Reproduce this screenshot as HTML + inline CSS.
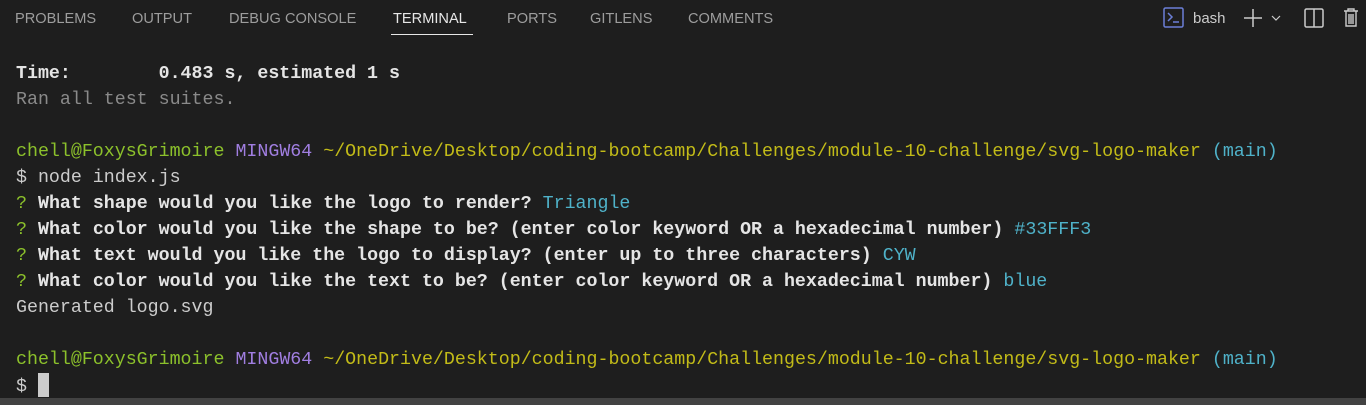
<!DOCTYPE html>
<html><head><meta charset="utf-8"><style>
html,body{margin:0;padding:0;background:#1e1e1e;width:1366px;height:405px;overflow:hidden;position:relative}
.tab{position:absolute;top:10px;font:14.6px "Liberation Sans",sans-serif;color:#9d9d9d;line-height:18px;white-space:nowrap}
.act{color:#e7e7e7}
.ul{position:absolute;left:391px;top:34px;width:82px;height:1px;background:#e7e7e7}
.term{position:absolute;left:16px;top:61px;font:18.3px "Liberation Mono",monospace;line-height:26px;color:#cccccc;white-space:pre}
.b{font-weight:bold;color:#e5e5e5}
.g{color:#8cc12b}.p{color:#a07ee0}.y{color:#c2bb18}.c{color:#4fb2c9}.gr{color:#8a8a8a}
.cur{display:inline-block;width:11px;height:24px;background:#cccccc;vertical-align:-6px}
.bar{position:absolute;left:0;top:398px;width:1366px;height:7px;background:#424242}
</style></head><body>
<div class="tab" style="left:15px">PROBLEMS</div>
<div class="tab" style="left:132px">OUTPUT</div>
<div class="tab" style="left:229px">DEBUG CONSOLE</div>
<div class="tab act" style="left:393px">TERMINAL</div>
<div class="tab" style="left:507px">PORTS</div>
<div class="tab" style="left:590px">GITLENS</div>
<div class="tab" style="left:688px">COMMENTS</div>
<div class="ul"></div>
<svg style="position:absolute;left:1163px;top:7px" width="22" height="22" viewBox="0 0 22 22"><rect x="1" y="1" width="19" height="19" rx="1.5" fill="none" stroke="#6b7fd7" stroke-width="1.5"/><path d="M5 6l4 4-4 4M10 15h6" fill="none" stroke="#6b7fd7" stroke-width="1.5"/></svg>
<div class="tab act" style="left:1193px;top:10px;font-size:15px;color:#cccccc">bash</div>
<svg style="position:absolute;left:1242px;top:7px" width="22" height="22"><path d="M11 2v18M2 11h18" stroke="#cccccc" stroke-width="1.5"/></svg>
<svg style="position:absolute;left:1270px;top:12px" width="12" height="12"><path d="M2 4l4 4 4-4" fill="none" stroke="#cccccc" stroke-width="1.2"/></svg>
<svg style="position:absolute;left:1303px;top:7px" width="22" height="22"><rect x="2" y="2" width="18" height="18" rx="1.5" fill="none" stroke="#cccccc" stroke-width="1.5"/><path d="M11 2v18" stroke="#cccccc" stroke-width="1.5"/></svg>
<svg style="position:absolute;left:1340px;top:6px" width="22" height="22"><path d="M4 5h14M8 5V3h6v2M6 5v15h10V5M9 8v10M11 8v10M13 8v10" fill="none" stroke="#cccccc" stroke-width="1.4"/></svg>
<div class="term"><span class="b">Time:        0.483 s, estimated 1 s</span>
<span class="gr">Ran all test suites.</span>

<span class="g">chell@FoxysGrimoire</span> <span class="p">MINGW64</span> <span class="y">~/OneDrive/Desktop/coding-bootcamp/Challenges/module-10-challenge/svg-logo-maker</span> <span class="c">(main)</span>
$ node index.js
<span class="g">?</span> <span class="b">What shape would you like the logo to render?</span> <span class="c">Triangle</span>
<span class="g">?</span> <span class="b">What color would you like the shape to be? (enter color keyword OR a hexadecimal number)</span> <span class="c">#33FFF3</span>
<span class="g">?</span> <span class="b">What text would you like the logo to display? (enter up to three characters)</span> <span class="c">CYW</span>
<span class="g">?</span> <span class="b">What color would you like the text to be? (enter color keyword OR a hexadecimal number)</span> <span class="c">blue</span>
Generated logo.svg

<span class="g">chell@FoxysGrimoire</span> <span class="p">MINGW64</span> <span class="y">~/OneDrive/Desktop/coding-bootcamp/Challenges/module-10-challenge/svg-logo-maker</span> <span class="c">(main)</span>
$ <span class="cur"></span></div>
<div class="bar"></div>
</body></html>
